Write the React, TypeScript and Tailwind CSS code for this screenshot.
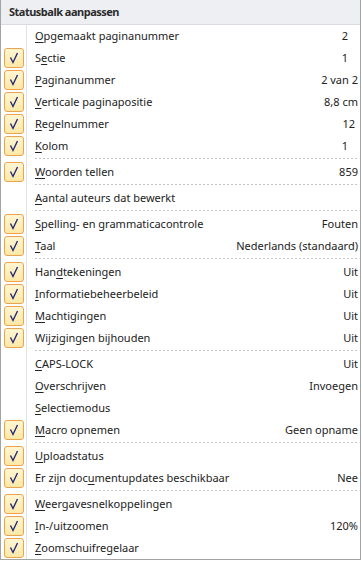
import React from "react";

type Item =
  | { kind: "sep" }
  | { kind: "row"; label: string; u: number; value?: string; checked?: boolean; pr?: string };

const items: Item[] = [
  { kind: "row", label: "Opgemaakt paginanummer", u: 0, value: "2", pr: "pr-[12px]" },
  { kind: "row", label: "Sectie", u: 1, value: "1", checked: true, pr: "pr-[12px]" },
  { kind: "row", label: "Paginanummer", u: 0, value: "2 van 2", checked: true },
  { kind: "row", label: "Verticale paginapositie", u: 0, value: "8,8 cm", checked: true },
  { kind: "row", label: "Regelnummer", u: 0, value: "12", checked: true, pr: "pr-[5px]" },
  { kind: "row", label: "Kolom", u: 0, value: "1", checked: true, pr: "pr-[12px]" },
  { kind: "sep" },
  { kind: "row", label: "Woorden tellen", u: 0, value: "859", checked: true },
  { kind: "sep" },
  { kind: "row", label: "Aantal auteurs dat bewerkt", u: 0 },
  { kind: "sep" },
  { kind: "row", label: "Spelling- en grammaticacontrole", u: 0, value: "Fouten", checked: true },
  { kind: "row", label: "Taal", u: 0, value: "Nederlands (standaard)", checked: true },
  { kind: "sep" },
  { kind: "row", label: "Handtekeningen", u: 3, value: "Uit", checked: true },
  { kind: "row", label: "Informatiebeheerbeleid", u: 0, value: "Uit", checked: true },
  { kind: "row", label: "Machtigingen", u: 0, value: "Uit", checked: true },
  { kind: "row", label: "Wijzigingen bijhouden", u: 2, value: "Uit", checked: true },
  { kind: "sep" },
  { kind: "row", label: "CAPS-LOCK", u: 0, value: "Uit" },
  { kind: "row", label: "Overschrijven", u: 0, value: "Invoegen" },
  { kind: "row", label: "Selectiemodus", u: 0 },
  { kind: "row", label: "Macro opnemen", u: 0, value: "Geen opname", checked: true },
  { kind: "sep" },
  { kind: "row", label: "Uploadstatus", u: 0, checked: true },
  { kind: "row", label: "Er zijn documentupdates beschikbaar", u: 11, value: "Nee", checked: true },
  { kind: "sep" },
  { kind: "row", label: "Weergavesnelkoppelingen", u: 0, checked: true },
  { kind: "row", label: "In-/uitzoomen", u: 0, value: "120%", checked: true },
  { kind: "row", label: "Zoomschuifregelaar", u: 0, checked: true },
];

function Check() {
  return (
    <div className="w-[20px] h-[20px] rounded-[3px] border border-[#eda24e] bg-[linear-gradient(to_bottom,#fff6d2,#fde8a6)] flex items-center justify-center">
      <svg width="18" height="18" viewBox="0 0 18 18">
        <path d="M5.5 8.5 L8 13.5 L12.5 4" fill="none" stroke="#1f2a7c" strokeWidth="1.4" strokeLinejoin="miter" />
      </svg>
    </div>
  );
}

function Label({ text, u }: { text: string; u: number }) {
  return (
    <span>
      {text.slice(0, u)}
      <span className="underline underline-offset-[2px] decoration-[1px]">{text[u]}</span>
      {text.slice(u + 1)}
    </span>
  );
}

export default function App() {
  return (
    <div
      className="w-[361px] h-[560px] bg-white border-l border-r border-b border-[#a3a3a3] flex flex-col text-[11px] text-[#222]"
      style={{ fontFamily: '"Noto Sans", "Open Sans", sans-serif' }}
    >
      <div className="h-[25px] shrink-0 bg-[#eeeff3] border-b border-[#dadbe2] flex items-center pl-[8px] font-bold text-[11px] tracking-[-0.5px] text-[#2b2b2b]">
        Statusbalk aanpassen
      </div>
      {items.map((it, i) =>
        it.kind === "sep" ? (
          <div key={i} className="h-[4px] flex shrink-0">
            <div className="w-[26px] border-r border-[#e2e3e3] shrink-0" />
            <div className="flex-1 pl-[8px] pr-[2px] pt-[1px]">
              <div className="h-[1px] bg-[linear-gradient(to_right,#c4c4c4_50%,transparent_50%)] bg-[length:4px_1px]" />
            </div>
          </div>
        ) : (
          <div key={i} className="h-[22px] flex shrink-0">
            <div className="w-[26px] border-r border-[#e2e3e3] shrink-0 pl-[3px] pt-[1px]">
              {it.checked ? <Check /> : null}
            </div>
            <div className={`flex-1 flex items-center justify-between pl-[8px] ${it.pr ?? "pr-[2px]"}`}>
              <Label text={it.label} u={it.u} />
              {it.value ? <span>{it.value}</span> : null}
            </div>
          </div>
        )
      )}
    </div>
  );
}
